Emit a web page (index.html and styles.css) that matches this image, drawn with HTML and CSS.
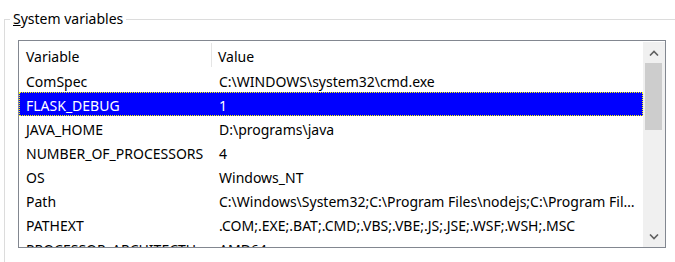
FILE: index.html
```html
<!DOCTYPE html>
<html lang="en">

<head>
  <meta charset="UTF-8" />
  <title>Environment Variables</title>
  <link rel="stylesheet" href="styles.css">
</head>

<body>
  <fieldset class="group">
    <legend><u>S</u>ystem variables</legend>

    <div class="listbox">
      <div class="list">
        <div class="header">
          <div class="col name">Variable</div>
          <div class="col value">Value</div>
        </div>
        <div class="row">
          <div class="col name">ComSpec</div>
          <div class="col value">C:\WINDOWS\system32\cmd.exe</div>
        </div>
        <div class="row selected">
          <div class="col name">FLASK_DEBUG</div>
          <div class="col value">1</div>
        </div>
        <div class="row">
          <div class="col name">JAVA_HOME</div>
          <div class="col value">D:\programs\java</div>
        </div>
        <div class="row">
          <div class="col name">NUMBER_OF_PROCESSORS</div>
          <div class="col value">4</div>
        </div>
        <div class="row">
          <div class="col name">OS</div>
          <div class="col value">Windows_NT</div>
        </div>
        <div class="row">
          <div class="col name">Path</div>
          <div class="col value">C:\Windows\System32;C:\Program Files\nodejs;C:\Program Files\Git\cmd;C:\Python</div>
        </div>
        <div class="row">
          <div class="col name">PATHEXT</div>
          <div class="col value">.COM;.EXE;.BAT;.CMD;.VBS;.VBE;.JS;.JSE;.WSF;.WSH;.MSC</div>
        </div>
        <div class="row">
          <div class="col name">PROCESSOR_ARCHITECTURE</div>
          <div class="col value">AMD64</div>
        </div>
      </div>

      <div class="scrollbar">
        <div class="arrow">
          <svg width="10" height="6" viewBox="0 0 10 6"><path d="M1 5.5 L5 1.5 L9 5.5" fill="none" stroke="#606060" stroke-width="1.6" /></svg>
        </div>
        <div class="track">
          <div class="thumb"></div>
        </div>
        <div class="arrow">
          <svg width="10" height="6" viewBox="0 0 10 6"><path d="M1 0.5 L5 4.5 L9 0.5" fill="none" stroke="#606060" stroke-width="1.6" /></svg>
        </div>
      </div>
    </div>
  </fieldset>
</body>

</html>
```

FILE: styles.css
```css
* {
  margin: 0;
  padding: 0;
  box-sizing: border-box;
}

body {
  background-color: #fff;
  font-family: "Noto Sans", "Open Sans", sans-serif;
  font-size: 14px;
  color: #000;
  overflow: hidden;
  width: 675px;
  height: 262px;
}

.group {
  margin: 10px 0 0 4px;
  width: 720px;
  height: 300px;
  border: 1px solid #dcdcdc;
  padding: 12px 0 0 13px;
}

.group legend {
  margin-left: -8px;
  padding: 0 3px;
  line-height: 18px;
}

.listbox {
  display: flex;
  width: 648px;
  height: 208px;
  border: 1px solid #828790;
}

.list {
  flex: 1;
  overflow: hidden;
}

.header,
.row {
  display: flex;
  align-items: center;
}

.header {
  height: 27px;
}

.row {
  height: 24px;
}

.col {
  white-space: nowrap;
  overflow: hidden;
  text-overflow: ellipsis;
  padding-top: 3px;
}

.col.name {
  width: 193px;
  padding-left: 7px;
}

.col.value {
  flex: 1;
  padding-left: 7px;
  padding-right: 6px;
}

.header .col.name {
  height: 24px;
  display: flex;
  align-items: center;
  border-right: 1px solid #e5e5e5;
}

.header .col.value {
  padding-left: 6px;
}

.row.selected {
  background-color: #0000ff;
  color: #fff;
  outline: 1px dotted #ffff00;
  outline-offset: -1px;
}

.scrollbar {
  width: 22px;
  display: flex;
  flex-direction: column;
  background-color: #f0f0f0;
  margin-top: 1px;
}

.arrow {
  height: 21px;
  display: flex;
  justify-content: center;
  align-items: center;
}

.track {
  flex: 1;
}

.thumb {
  width: 17px;
  margin-left: 2px;
  height: 67px;
  background-color: #cdcdcd;
}
```
